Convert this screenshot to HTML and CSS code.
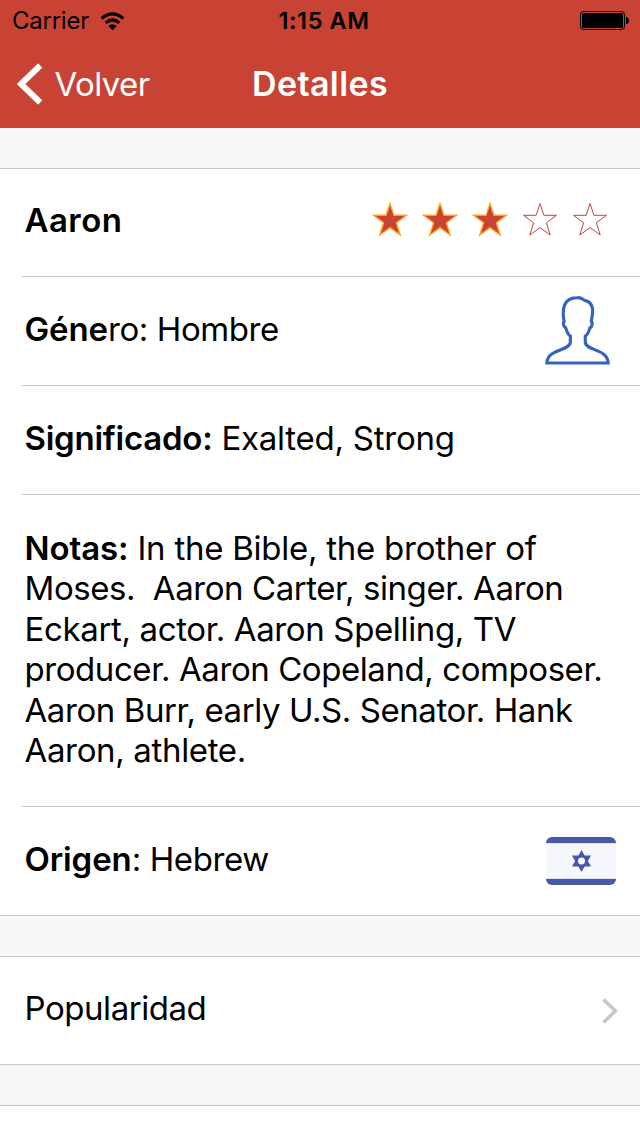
FILE: index.html
```
<!DOCTYPE html>
<html lang="es">
<head>
<meta charset="utf-8">
<title>Detalles</title>
<link rel="stylesheet" href="styles.css">
</head>
<body>
<header class="header">
  <div class="status">
    <div class="carrier"><span>Carrier</span>
      <svg class="wifi" viewBox="0 0 75 57"><path d="M2 16Q37.500-14 73 16L66.500 23Q37.500-2 8.500 23ZM14 29Q37.500 9 61 29L54.500 36Q37.500 22 20.500 36ZM25 42Q37.500 32 50 42L37.500 55Z"/></svg>
    </div>
    <span class="time">1:15 AM</span>
    <svg class="battery" viewBox="0 0 49 19"><rect x=".5" y=".5" width="44" height="18" rx="3" fill="none" stroke="#000"/><rect x="2" y="2" width="41" height="15" rx="1.500"/><path d="M46 6h1q2 1 2 3.500T47 13h-1z"/></svg>
  </div>
  <nav class="nav">
    <div class="back">
      <svg class="back-icon" viewBox="0 0 26 42"><path d="M23.200 2.500 4 21l19.200 18.500" fill="none" stroke="#fff" stroke-width="6"/></svg>
      <span class="back-label">Volver</span>
    </div>
    <h1 class="title">Detalles</h1>
    <span></span>
  </nav>
</header>
<main>
  <section class="group">
    <div class="row first"><span class="text name"><b>Aaron</b></span>
      <svg class="stars" viewBox="0 0 236 36">
        <defs><path id="star" d="M18 1.500 21.900 13.300H34.500L24.400 20.800 28.200 33 18 25.600 7.800 33 11.600 20.800 1.500 13.300H14.100Z"/></defs>
        <g fill="#c84334" stroke="#ffa51f" stroke-width="1.400"><use href="#star"/><use href="#star" x="50"/><use href="#star" x="100"/></g>
        <g fill="none" stroke="#c84334" stroke-width="1"><use href="#star" x="150"/><use href="#star" x="200"/></g>
      </svg>
    </div>
    <div class="row"><span class="text gender"><b>Géne</b>ro: Hombre</span>
      <svg class="person" viewBox="45 47 195 208"><path d="M50 249C51 205 121 213 121 186V168C112 162 110 153 107 143C101 142 98 126 102 123C96 90 98 52 142 52C158 51 160 60 166 61C191 67 191 90 184 123C189 126 186 142 180 143C177 153 175 162 166 168V186C166 213 234 205 235 249Z" fill="none" stroke="#3564bd" stroke-width="9.500"/></svg>
    </div>
    <div class="row"><span class="text meaning"><b>Significado:</b> Exalted, Strong</span></div>
    <div class="row notes">
      <p class="text">
        <span class="line l1"><b>Notas:</b> In the Bible, the brother of</span>
        <span class="line l2">Moses.&nbsp; Aaron Carter, singer. Aaron</span>
        <span class="line l3">Eckart, actor. Aaron Spelling, TV</span>
        <span class="line l4">producer. Aaron Copeland, composer.</span>
        <span class="line l5">Aaron Burr, early U.S. Senator. Hank</span>
        <span class="line l6">Aaron, athlete.</span>
      </p>
    </div>
    <div class="row"><span class="text origin"><b>Origen</b>: Hebrew</span>
      <svg class="flag" viewBox="0 0 70 48"><rect width="70" height="48" rx="6" fill="#4858a9"/><path d="M0 6h70v36H0z" fill="#f5f7fc"/><path d="M0 6h70v1H0zM0 41h70v1H0z" fill="#dce1ef"/><path d="M35.500 13 38.600 18.500H45L41.900 24 45 29.500H38.600L35.500 35 32.400 29.500H26L29.100 24 26 18.500H32.400Z" fill="#4858a9"/><circle cx="35.500" cy="24" r="3.500" fill="#f5f7fc"/></svg>
    </div>
  </section>
  <section class="group">
    <div class="row popular"><span class="text pop">Popularidad</span>
      <svg class="chevron" viewBox="0 0 16 26"><path d="M1.500 1.500 13.500 13 1.500 24.500" fill="none" stroke="#c7c7cc" stroke-width="3.600"/></svg>
    </div>
  </section>
  <section class="group last"></section>
</main>
</body>
</html>
```
FILE: styles.css
```
* { box-sizing: border-box; }
body {
  margin: 0;
  height: 1136px;
  overflow: hidden;
  display: flex;
  flex-direction: column;
  background: #f7f7f7;
  color: #000;
  font-family: Inter, "Liberation Sans", sans-serif;
}
svg { display: block; flex: none; }
.header { height: 128px; flex: none; background: #c84334; }
.status, .nav {
  display: grid;
  grid-template-columns: 1fr auto 1fr;
  align-items: center;
}
.status { height: 40px; padding: 1px 11px 0 12px; font-size: 24px; line-height: 40px; }
.carrier { display: flex; align-items: center; gap: 11px; letter-spacing: -.25px; }
.wifi { width: 25px; height: 19px; }
.time { font-weight: 600; font-size: 23.500px; letter-spacing: .6px; padding-left: 7px; }
.battery { width: 49px; height: 19px; justify-self: end; margin-bottom: 2px; }
.nav { height: 88px; padding: 0 17px; color: #fff; }
.back { display: flex; align-items: center; gap: 11.500px; font-size: 33px; }
.back-label { letter-spacing: -.6px; }
.back-icon { width: 26px; height: 42px; }
.title { margin: 0; padding-bottom: 2px; font-size: 34px; font-weight: 600; letter-spacing: .4px; }
main { flex: 1; }
.group {
  margin-top: 40px;
  border: solid #c8c7cc;
  border-width: 1px 0;
  background: #fff;
}
.row {
  height: 109px;
  margin-left: 22px;
  padding: 0 24px 4px 2.500px;
  display: flex;
  align-items: center;
  justify-content: space-between;
  border-bottom: 1px solid #c8c7cc;
}
.row:last-child { height: 108px; border-bottom: 0; }
.row.first { height: 108px; padding-bottom: 5px; }
.row.notes { height: 312px; align-items: flex-start; padding-top: 32.800px; }
.row.popular { height: 107px; padding-right: 22px; padding-bottom: 5px; }
.text { margin: 0; font-size: 33px; line-height: 40.500px; white-space: nowrap; }
.text b { font-weight: 600; letter-spacing: -.1px; }
.line { display: block; }
.name b { letter-spacing: .45px; }
.gender { letter-spacing: -.42px; }
.meaning { letter-spacing: -.25px; }
.meaning b { letter-spacing: -.25px; }
.l1 { letter-spacing: -.25px; }
.l2 { letter-spacing: -.43px; }
.l3 { letter-spacing: -.36px; }
.l4 { letter-spacing: -.43px; }
.l5 { letter-spacing: -.42px; }
.l6 { letter-spacing: -.34px; }
.origin { letter-spacing: -.37px; }
.pop { letter-spacing: -.45px; }
.stars { width: 236px; height: 36px; margin: 0 8px 1px 0; }
.person { width: 65px; height: 69px; margin: 2px 6px 0 0; }
.flag { width: 70px; height: 48px; margin-top: 3px; }
.chevron { width: 16px; height: 26px; margin-top: 6px; }
.last { height: 40px; }
```
